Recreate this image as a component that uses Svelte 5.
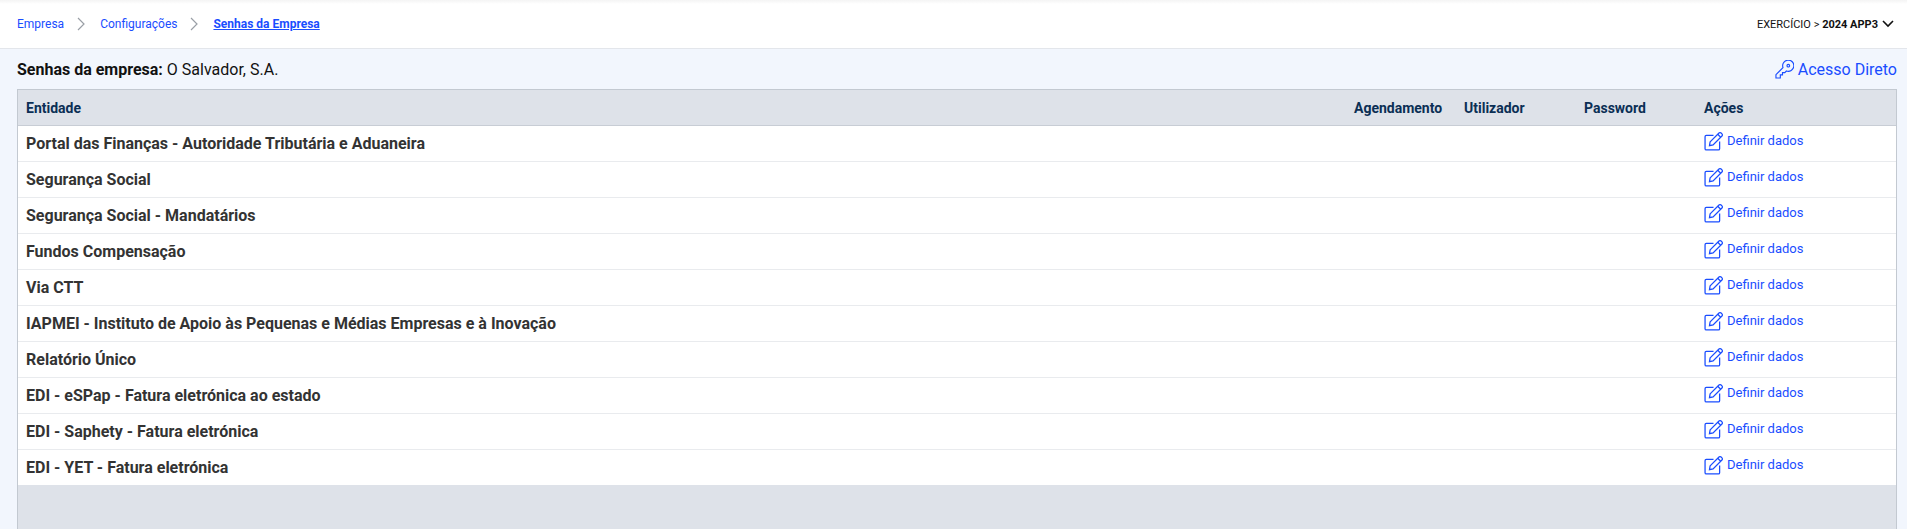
<script>
  const entities = [
    'Portal das Finanças - Autoridade Tributária e Aduaneira',
    'Segurança Social',
    'Segurança Social - Mandatários',
    'Fundos Compensação',
    'Via CTT',
    'IAPMEI - Instituto de Apoio às Pequenas e Médias Empresas e à Inovação',
    'Relatório Único',
    'EDI - eSPap - Fatura eletrónica ao estado',
    'EDI - Saphety - Fatura eletrónica',
    'EDI - YET - Fatura eletrónica'
  ];
</script>

<div class="page">
  <header class="topbar">
    <nav class="crumbs">
      <a href="#empresa">Empresa</a>
      <svg class="sep" viewBox="0 0 8 14" width="8" height="14"><path d="M1 1l6 6-6 6" /></svg>
      <a href="#config">Configurações</a>
      <svg class="sep" viewBox="0 0 8 14" width="8" height="14"><path d="M1 1l6 6-6 6" /></svg>
      <a class="current" href="#senhas">Senhas da Empresa</a>
    </nav>
    <div class="exercise">
      EXERCÍCIO &gt; <b>2024 APP3</b>
      <svg viewBox="0 0 12 8" width="12" height="8"><path d="M1 1l5 5 5-5" /></svg>
    </div>
  </header>

  <main class="content">
    <div class="title-row">
      <h1><b>Senhas da empresa:</b> O Salvador, S.A.</h1>
      <a class="direct" href="#acesso">
        <svg viewBox="0 0 20 20" width="19" height="19">
          <path d="M1 19v-3.6l7.4-7.4a5.9 5.9 0 1 1 3.6 3.6l-1.7 1.7H7.9v2.4H5.6V19z" />
          <circle cx="14" cy="6" r="1.4" />
        </svg>
        Acesso Direto
      </a>
    </div>

    <div class="panel">
      <table>
        <colgroup>
          <col />
          <col class="c-a" />
          <col class="c-b" />
          <col class="c-b" />
          <col class="c-c" />
        </colgroup>
        <thead>
          <tr>
            <th>Entidade</th>
            <th>Agendamento</th>
            <th>Utilizador</th>
            <th>Password</th>
            <th>Ações</th>
          </tr>
        </thead>
        <tbody>
          {#each entities as name}
            <tr>
              <td class="name">{name}</td>
              <td></td>
              <td></td>
              <td></td>
              <td>
                <a class="define" href="#definir">
                  <svg viewBox="0 0 18 18" width="19" height="19">
                    <path d="M9 3.2H2.2A1.2 1.2 0 0 0 1 4.4v11.4A1.2 1.2 0 0 0 2.2 17h11.4a1.2 1.2 0 0 0 1.2-1.2V9" />
                    <path d="M5.8 9.4L14.2 1a1.4 1.4 0 0 1 2 0l.8.8a1.4 1.4 0 0 1 0 2l-8.4 8.4-3.4.8z" />
                    <path d="M13 2.2l2.8 2.8" />
                  </svg>
                  Definir dados
                </a>
              </td>
            </tr>
          {/each}
        </tbody>
      </table>
    </div>
  </main>
</div>

<style>
  :global(body) {
    background: #f2f6fd;
    font-family: Roboto, "Liberation Sans", sans-serif;
  }

  .page {
    height: 529px;
    display: flex;
    flex-direction: column;
    overflow: hidden;
  }

  a {
    color: #1a4dff;
    text-decoration: none;
  }

  .topbar {
    height: 48px;
    flex: none;
    box-sizing: content-box;
    display: flex;
    align-items: center;
    justify-content: space-between;
    padding: 0 17px;
    background: linear-gradient(#f4f4f4, #fff 4px);
    border-bottom: 1px solid #e3e6eb;
  }

  .crumbs {
    display: flex;
    align-items: center;
    font-size: 12px;
  }

  .crumbs .sep {
    margin: 0 15px 0 13px;
    fill: none;
    stroke: #9a9fa6;
    stroke-width: 1.2;
  }

  .crumbs .current {
    font-weight: 700;
    text-decoration: underline;
  }

  .exercise {
    display: flex;
    align-items: center;
    margin-right: -4px;
    font-size: 11px;
    color: #111;
    white-space: pre;
  }

  .exercise b {
    font-weight: 700;
  }

  .exercise svg {
    margin-left: 4px;
    fill: none;
    stroke: #111;
    stroke-width: 1.6;
  }

  .content {
    flex: 1;
    display: flex;
    flex-direction: column;
    padding: 0 10px 0 17px;
    min-height: 0;
  }

  .title-row {
    height: 40px;
    flex: none;
    display: flex;
    align-items: center;
    justify-content: space-between;
  }

  h1 {
    margin: 0;
    font-size: 16px;
    font-weight: 400;
    color: #111;
  }

  h1 b {
    font-weight: 700;
  }

  .direct {
    display: flex;
    align-items: center;
    gap: 4px;
    font-size: 16px;
  }

  .direct svg {
    fill: none;
    stroke: #1a4dff;
    stroke-width: 1.2;
  }

  .panel {
    flex: 1;
    min-height: 0;
    background: #dee2e9;
    border: 1px solid #c3c9d1;
    border-bottom: 0;
  }

  table {
    width: 100%;
    table-layout: fixed;
    border-collapse: collapse;
  }

  .c-a {
    width: 110px;
  }

  .c-b {
    width: 120px;
  }

  .c-c {
    width: 200px;
  }

  th {
    height: 35px;
    padding: 0 8px;
    text-align: left;
    font-size: 14px;
    font-weight: 700;
    color: #0b2f55;
    border-bottom: 1px solid #c8cdd5;
  }

  td {
    height: 35px;
    padding: 0 8px;
    background: #fff;
    border-bottom: 1px solid #e9ebee;
  }

  tbody tr:last-child td {
    border-bottom: 0;
  }

  .name {
    font-size: 16px;
    font-weight: 700;
    color: #333;
  }

  .define {
    display: flex;
    align-items: center;
    gap: 4px;
    font-size: 13px;
    position: relative;
    top: -3px;
  }

  .define svg {
    margin-top: 2px;
    fill: none;
    stroke: #1a4dff;
    stroke-width: 1.2;
  }
</style>
